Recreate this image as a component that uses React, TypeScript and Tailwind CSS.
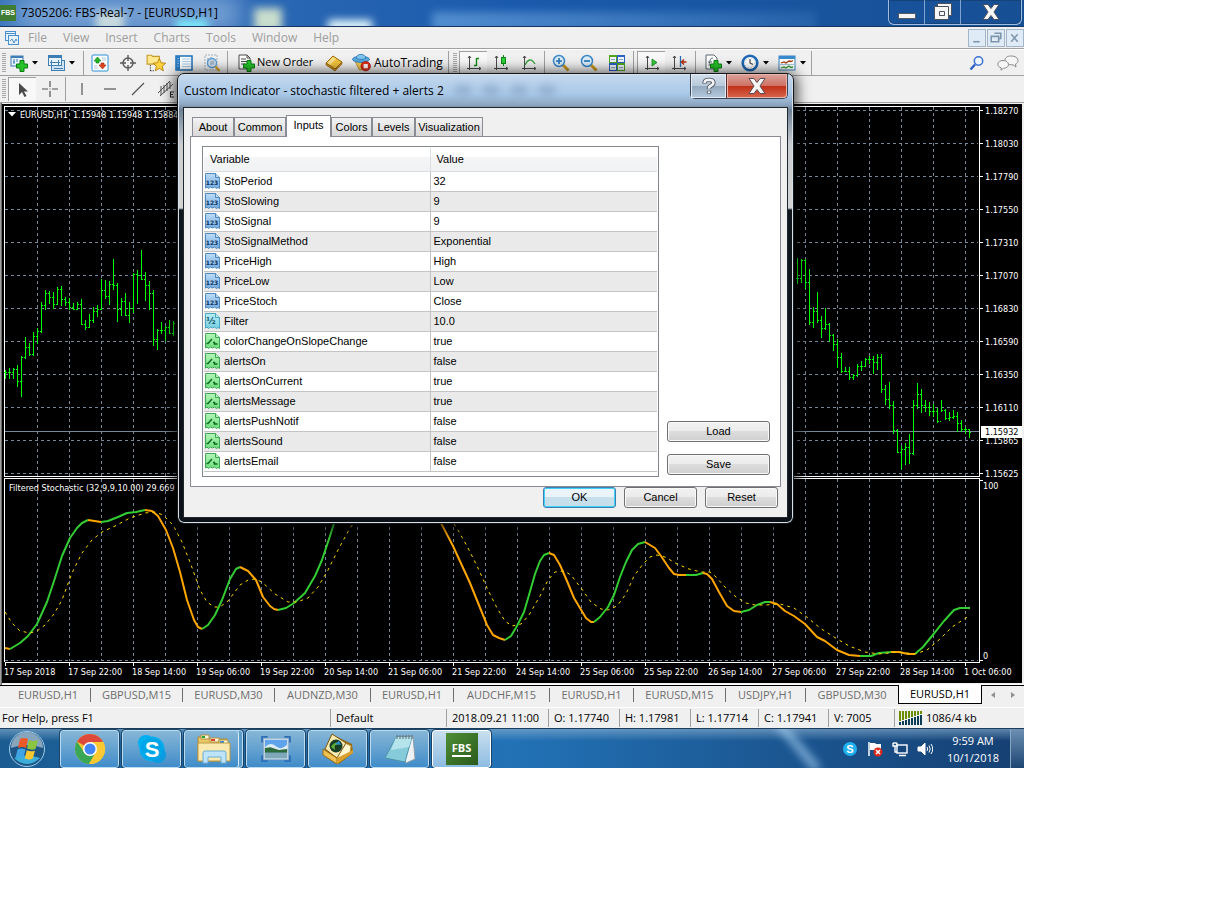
import React, { useState } from 'react';
import clsx from 'clsx';

type Bar = [number, number, number];
type Segment = { up: boolean; points: string };

// high, low, close of each bar, one bar every 4 units
const leftBars: Bar[] = [
  [370, 379, 372], [368, 379, 372], [368, 379, 369], [365, 387, 381], [356, 397, 357], [337, 359, 347],
  [343, 356, 354], [332, 356, 336], [328, 344, 331], [302, 333, 305], [290, 310, 293], [291, 304, 297],
  [292, 309, 304], [287, 305, 289], [286, 306, 299], [297, 306, 302], [298, 310, 307], [303, 310, 309],
  [302, 310, 304], [299, 325, 324], [320, 330, 327], [314, 328, 320], [307, 323, 311], [305, 317, 309],
  [279, 310, 290], [280, 299, 296], [281, 305, 284], [259, 290, 285], [283, 322, 309], [298, 316, 301],
  [293, 316, 315], [302, 323, 308], [273, 313, 274], [270, 304, 275], [250, 280, 279], [272, 301, 285],
  [281, 310, 293], [290, 346, 339], [329, 350, 330], [322, 334, 330], [326, 341, 327], [320, 334, 333],
  [321, 336, 323],
];

const rightBars: Bar[] = [
  [258, 284, 278], [259, 283, 260], [259, 289, 282], [269, 325, 322], [307, 328, 311], [292, 323, 320],
  [316, 338, 328], [308, 330, 324], [323, 342, 335], [334, 351, 344], [339, 368, 357], [353, 373, 371],
  [367, 372, 371], [367, 380, 377], [374, 380, 375], [364, 377, 366], [361, 371, 366], [358, 367, 359],
  [356, 364, 359], [356, 374, 362], [354, 370, 357], [354, 393, 389], [385, 405, 399], [382, 409, 405],
  [401, 434, 430], [429, 453, 452], [446, 469, 449], [443, 465, 447], [434, 464, 453], [400, 455, 405],
  [383, 409, 394], [389, 413, 405], [400, 412, 407], [402, 416, 411], [404, 417, 411], [408, 423, 421],
  [400, 412, 410], [409, 420, 418], [412, 421, 417], [410, 419, 416], [412, 432, 423], [420, 432, 429],
  [427, 434, 429], [429, 438, 432],
];

const stochastic: Segment[] = [
  { up: false, points: '5,648 10,649' },
  { up: true, points: '10,649 20,643 28,636 37,624 47,602 55,578 62,556 70,538 77,528 82,523 88,520' },
  { up: false, points: '88,520 101,522' },
  { up: true, points: '101,522 108,521 118,517 127,513 136,512 145,510' },
  { up: false, points: '145,510 152,511 158,516 166,530 173,548 180,572 187,600 194,620 198,627 202,629' },
  { up: true, points: '202,629 208,625 215,615 222,600 230,579 236,569 240,567' },
  { up: false, points: '240,567 248,571 256,580 263,597 270,606 274,609 278,610' },
  { up: true, points: '278,610 286,608 294,603 305,593 315,576 322,560 330,536 340,505' },
  { up: false, points: '432,500 441,523 453,546 470,583 487,625 493,635 499,638 505,640' },
  { up: true, points: '505,640 511,636 517,626 524,612 529,595 535,574 540,561 544,555 549,553' },
  { up: false, points: '549,553 554,555 560,565 567,581 574,598 580,608 586,618 591,622 594,622' },
  { up: true, points: '594,622 600,617 608,607 614,595 620,577 626,562 632,550 638,544 645,542' },
  { up: false, points: '645,542 650,545 655,548 661,556 669,568 674,574 679,575 686,575' },
  { up: true, points: '686,575 696,575 703,573' },
  { up: false, points: '703,573 707,574 712,579 719,592 727,606 734,611 741,612' },
  { up: true, points: '741,612 749,610 757,605 765,602 770,602' },
  { up: false, points: '770,602 777,604 785,611 794,616 805,624 817,637 825,641 837,650 849,655 860,656' },
  { up: true, points: '860,656 871,656 879,653 891,652' },
  { up: false, points: '891,652 899,652 908,654 915,654' },
  { up: true, points: '915,654 923,647 932,636 944,621 954,610 960,608 970,608' },
];

const signalLeft =
  '5,612 12,623 20,631 30,633 37,631 45,625 54,614 62,600 72,573 82,553 92,540 102,532 115,526 130,518 145,513 155,512 163,515 173,525 182,542 190,562 200,590 207,602 214,607 220,607 228,601 240,585 248,580 255,579 262,582 275,594 288,602 297,602 308,598 318,587 328,570 338,550 350,528 358,518';
const signalRight =
  '450,518 458,530 468,548 478,568 487,588 497,608 505,621 512,626 521,624 529,615 540,596 548,580 555,572 564,571 571,575 581,588 591,602 601,609 608,610 617,606 626,594 634,576 643,564 650,557 657,555 665,557 677,564 689,569 701,572 710,572 715,576 725,587 736,597 746,603 755,605 765,605 780,604 794,608 808,618 820,628 834,637 849,646 865,652 879,654 899,652 915,654 927,650 940,639 952,627 969,616';

const prices = ['1.18270', '1.18030', '1.17790', '1.17550', '1.17310', '1.17070', '1.16830', '1.16590', '1.16350', '1.16110', '1.15865', '1.15625'];

const dates = [
  '17 Sep 2018', '17 Sep 22:00', '18 Sep 14:00', '19 Sep 06:00', '19 Sep 22:00', '20 Sep 14:00', '21 Sep 06:00', '21 Sep 22:00',
  '24 Sep 14:00', '25 Sep 06:00', '25 Sep 22:00', '26 Sep 14:00', '27 Sep 06:00', '27 Sep 22:00', '28 Sep 14:00', '1 Oct 06:00',
];

const menuItems = ['File', 'View', 'Insert', 'Charts', 'Tools', 'Window', 'Help'];

const chartTabs = [
  { label: 'EURUSD,H1', width: 'w-[85px]' },
  { label: 'GBPUSD,M15', width: 'w-[92px]' },
  { label: 'EURUSD,M30', width: 'w-[92px]' },
  { label: 'AUDNZD,M30', width: 'w-[96px]' },
  { label: 'EURUSD,H1', width: 'w-[83px]' },
  { label: 'AUDCHF,M15', width: 'w-[96px]' },
  { label: 'EURUSD,H1', width: 'w-[84px]' },
  { label: 'EURUSD,M15', width: 'w-[92px]' },
  { label: 'USDJPY,H1', width: 'w-[80px]' },
  { label: 'GBPUSD,M30', width: 'w-[92px]' },
];

const statusCells = [
  { text: 'Default', width: 'w-[116px]' },
  { text: '2018.09.21 11:00', width: 'w-[102px]' },
  { text: 'O: 1.17740', width: 'w-[71px]' },
  { text: 'H: 1.17981', width: 'w-[71px]' },
  { text: 'L: 1.17714', width: 'w-[68px]' },
  { text: 'C: 1.17941', width: 'w-[70px]' },
  { text: 'V: 7005', width: 'w-[66px]' },
];

const dialogTabs = [
  { label: 'About', width: 'w-[42px]' },
  { label: 'Common', width: 'w-[52px]' },
  { label: 'Inputs', width: 'w-[45px]' },
  { label: 'Colors', width: 'w-[41px]' },
  { label: 'Levels', width: 'w-[43px]' },
  { label: 'Visualization', width: 'w-[68px]' },
];

type Kind = 'int' | 'double' | 'bool';

const inputs: { name: string; value: string; kind: Kind }[] = [
  { name: 'StoPeriod', value: '32', kind: 'int' },
  { name: 'StoSlowing', value: '9', kind: 'int' },
  { name: 'StoSignal', value: '9', kind: 'int' },
  { name: 'StoSignalMethod', value: 'Exponential', kind: 'int' },
  { name: 'PriceHigh', value: 'High', kind: 'int' },
  { name: 'PriceLow', value: 'Low', kind: 'int' },
  { name: 'PriceStoch', value: 'Close', kind: 'int' },
  { name: 'Filter', value: '10.0', kind: 'double' },
  { name: 'colorChangeOnSlopeChange', value: 'true', kind: 'bool' },
  { name: 'alertsOn', value: 'false', kind: 'bool' },
  { name: 'alertsOnCurrent', value: 'true', kind: 'bool' },
  { name: 'alertsMessage', value: 'true', kind: 'bool' },
  { name: 'alertsPushNotif', value: 'false', kind: 'bool' },
  { name: 'alertsSound', value: 'false', kind: 'bool' },
  { name: 'alertsEmail', value: 'false', kind: 'bool' },
];

const Svg: React.FC<{ size?: number; children: React.ReactNode }> = ({ size = 18, children }) => (
  <svg width={size} height={size} viewBox="0 0 18 18" fill="none" className="shrink-0">
    {children}
  </svg>
);

const Plus = () => <path d="M10 6.500h4v3.500h3.500v4H14v3.500h-4V14H6.500v-4H10z" fill="#27c32a" stroke="#0a7d12" />;

const NewChartIcon = () => (
  <Svg>
    <rect x="1" y="2" width="12" height="10" fill="#e8f3fc" stroke="#3f7db5" />
    <path d="M1 3h12" stroke="#3f7db5" strokeWidth="2" />
    <path d="M4 5v5M3 8h2M7 5v3" stroke="#3f7db5" />
    <Plus />
  </Svg>
);

const ProfilesIcon = () => (
  <Svg>
    <rect x="4.500" y="6.500" width="13" height="10" fill="#cfe3f5" stroke="#3f7db5" />
    <rect x="1.500" y="1.500" width="13" height="10" fill="#e8f3fc" stroke="#3f7db5" />
    <path d="M1 3h14" stroke="#3f7db5" strokeWidth="2" />
    <path d="M3 8.500h10M4.500 6v5M11.500 6v5" stroke="#3f7db5" />
    <path d="M7 14.500h9" stroke="#3f7db5" />
  </Svg>
);

const MarketWatchIcon = () => (
  <Svg>
    <rect x="1" y="1" width="16" height="16" rx="1" fill="#fdfeff" stroke="#2c8fd8" />
    <path d="M6.500 3L3 7h2v2h3V7h2z" fill="#22b322" stroke="#0d7d12" strokeWidth=".6" />
    <path d="M11.500 15L15 11h-2V9h-3v2H8z" fill="#e2421f" stroke="#96220b" strokeWidth=".6" />
    <path d="M11 4h4M11 6h4M3 12h3M3 14h4" stroke="#b6c7d6" />
  </Svg>
);

const CrosshairIcon = () => (
  <Svg>
    <circle cx="9" cy="9" r="5" stroke="#5b5b5b" strokeWidth="1.500" />
    <path d="M9 1v6M9 11v6M1 9h6M11 9h6" stroke="#5b5b5b" strokeWidth="1.400" />
  </Svg>
);

const NavigatorIcon = () => (
  <Svg size={20}>
    <path d="M1 2h4l1 1h6v7H1z" fill="#ffe98c" stroke="#c39a2a" />
    <path d="M4 11v6M4 16h4" stroke="#222" strokeDasharray="1 1" />
    <path d="M12 5l1.700 3.800 4 .4-3 2.700.9 4.100-3.600-2.100L8.400 16l.9-4.100-3-2.700 4-.4z" fill="#ffd23e" stroke="#b47b0b" strokeWidth=".8" />
  </Svg>
);

const TerminalIcon = () => (
  <Svg>
    <rect x="1" y="2" width="16" height="14" fill="#fff" stroke="#1d6fb8" strokeWidth="1.500" />
    <rect x="1" y="2" width="4" height="14" fill="#2c7cc2" />
    <path d="M7 5h9M7 7.500h9M7 10h9M7 12.500h9" stroke="#a9cdec" />
    <path d="M3 4v10" stroke="#bfe0fb" strokeDasharray="1 1.500" />
  </Svg>
);

const TesterIcon = () => (
  <Svg>
    <path d="M2 1h12v15H2z" fill="#eef2f5" stroke="#a5afb8" strokeDasharray="2 1" />
    <path d="M5 4v8M8 3v4M11 5v6" stroke="#7a8a99" />
    <circle cx="9" cy="9" r="4.500" fill="#cfe4f5" fillOpacity=".8" stroke="#5b9bd1" strokeWidth="1.300" />
    <path d="M8 7v4M10 6.500v4" stroke="#7a8a99" />
    <path d="M12.500 12.500l4 4.500" stroke="#d9a520" strokeWidth="2.400" />
  </Svg>
);

const OrderIcon = () => (
  <Svg>
    <path d="M2 1h8l3 3v11H2z" fill="#fff" stroke="#4c4c4c" />
    <path d="M10 1v3h3M4 5h5M4 7.500h6M4 10h4" stroke="#4c4c4c" />
    <Plus />
  </Svg>
);

const BookIcon = () => (
  <Svg>
    <path d="M1 9l7-7 9 6-7 7z" fill="#f2c23a" stroke="#9a6b0c" />
    <path d="M2 9l6-6 3 2-6 6z" fill="#fbe08a" />
    <path d="M1 9v2l9 6 7-7V8l-7 7z" fill="#c98f17" stroke="#8a5d09" strokeWidth=".6" />
  </Svg>
);

const AutoTradingIcon = () => (
  <Svg size={19}>
    <path d="M3 8h11l-3 8H7z" fill="#f2cb54" stroke="#a87a12" strokeWidth=".7" />
    <ellipse cx="8.500" cy="6" rx="8" ry="3" fill="#58a9df" stroke="#2871ad" strokeWidth=".7" />
    <path d="M4 5c0-5 9-5 9 0-2 1.500-7 1.500-9 0z" fill="#7fc4ee" stroke="#2871ad" strokeWidth=".7" />
    <circle cx="13" cy="12.500" r="4.500" fill="#de2c1b" stroke="#9a1409" strokeWidth=".6" />
    <rect x="11" y="10.500" width="4" height="4" fill="#fff" />
  </Svg>
);

const Axes = () => <path d="M4.500 2v14M2 14.500h14M3 4l1.500-2L6 4M14 13l2 1.500-2 1.500" stroke="#4a4a4a" />;

const BarChartIcon = () => (
  <Svg>
    <Axes />
    <path d="M11.500 4v8M9 11.500h2.500M11.500 4.500H14" stroke="#0e8a16" strokeWidth="1.400" />
  </Svg>
);

const CandleIcon = () => (
  <Svg>
    <Axes />
    <path d="M11.500 1v11" stroke="#0e8a16" />
    <rect x="9.500" y="3.500" width="4" height="6" fill="#2bd13a" stroke="#0e8a16" />
  </Svg>
);

const LineChartIcon = () => (
  <Svg>
    <Axes />
    <path d="M5 11c3-6 6-7 10-1" stroke="#2f9d35" strokeWidth="1.300" />
  </Svg>
);

const ZoomIcon: React.FC<{ plus?: boolean }> = ({ plus }) => (
  <Svg>
    <path d="M11 11l5.500 5.500" stroke="#c9991d" strokeWidth="3" />
    <circle cx="7" cy="7" r="5.500" fill="#d9edfb" stroke="#3c86c6" strokeWidth="1.500" />
    <path d={plus ? 'M4 7h6M7 4v6' : 'M4 7h6'} stroke="#2470b4" strokeWidth="1.600" />
  </Svg>
);

const TilesIcon = () => (
  <Svg>
    <rect x="1" y="1" width="8" height="8" fill="#55a51c" />
    <rect x="9" y="1" width="8" height="8" fill="#2d5fc4" />
    <rect x="1" y="9" width="8" height="8" fill="#2d5fc4" />
    <rect x="9" y="9" width="8" height="8" fill="#55a51c" />
    <path d="M2 3h6v5H2zM10 3h6v5h-6zM2 11h6v5H2zM10 11h6v5h-6z" fill="#eef5fb" />
    <path d="M3 5.500h4M11 5.500h4M3 13.500h4M11 13.500h4" stroke="#8fa6bb" />
  </Svg>
);

const AutoScrollIcon = () => (
  <Svg>
    <Axes />
    <path d="M9 5l5 3.500L9 12z" fill="#38c942" stroke="#0e8a16" strokeWidth=".8" />
  </Svg>
);

const ShiftIcon = () => (
  <Svg>
    <Axes />
    <path d="M10.500 2v11" stroke="#2470b4" strokeWidth="1.300" />
    <path d="M16.500 8h-5M14 5.500L11.500 8l2.500 2.500" stroke="#b5300f" strokeWidth="1.500" />
  </Svg>
);

const IndicatorsIcon = () => (
  <Svg>
    <path d="M2 1h8l3 3v11H2z" fill="#fff" stroke="#5d6a75" />
    <path d="M5 12c1-8 2-8 4-8M4 8h4" stroke="#5d6a75" />
    <Plus />
  </Svg>
);

const ClockIcon = () => (
  <Svg>
    <circle cx="9" cy="9" r="7.300" fill="#fff" stroke="#1f69b4" strokeWidth="2.600" />
    <path d="M9 5v4l3 1.500" stroke="#444" strokeWidth="1.200" />
    <circle cx="9" cy="9" r="5" stroke="#9fb6c9" strokeWidth=".8" strokeDasharray="1 2" />
  </Svg>
);

const TemplateIcon = () => (
  <Svg>
    <rect x="1" y="2" width="16" height="14" fill="#fff" stroke="#3b82bd" />
    <path d="M1 3.500h16" stroke="#3b8bd0" strokeWidth="3" />
    <path d="M3 9l3-1 2 1 3-2 2 .500 2-1" stroke="#a53b12" strokeWidth="1.300" />
    <path d="M3 14l3-1 2 1 3-2 2 1.500 2-.500" stroke="#2f9d35" strokeWidth="1.300" />
    <path d="M1 10.500h16" stroke="#a8c6dd" />
  </Svg>
);

const CursorIcon = () => (
  <Svg>
    <path d="M5 2v12l3-3 2.500 5 2-1L10 10.500h4z" fill="#4a4a4a" />
  </Svg>
);

const DrawIcon: React.FC<{ d: string }> = ({ d }) => (
  <Svg>
    <path d={d} stroke="#555" strokeWidth="1.200" />
  </Svg>
);

const ChannelIcon = () => (
  <Svg>
    <path d="M1 13L13 1M3 16L16 4M4 6v9M7 5v8M10 3v8M13 2v7" stroke="#4d4d4d" />
    <path d="M13 12h4M13 14.500h3M13 17h4M13.500 12v5" stroke="#222" />
  </Svg>
);

interface ToolButtonProps {
  label: string;
  pressed?: boolean;
  menu?: boolean;
  inset?: boolean;
  children: React.ReactNode;
}

const ToolButton: React.FC<ToolButtonProps> = ({ label, pressed, menu, inset, children }) => (
  <button
    aria-label={label}
    title={label}
    className={clsx(
      'flex h-6 shrink-0 items-center',
      menu ? 'w-[37px] gap-1' : 'w-7 justify-center',
      menu && (inset ? 'pl-[5px]' : 'pl-[2px]'),
      pressed && 'border-t border-l border-[#a0a0a0] bg-[#f8f8f8]'
    )}
  >
    {children}
    {menu && (
      <svg width="6" height="4" viewBox="0 0 6 4" className="shrink-0">
        <path d="M0 0h6L3 3.500z" fill="#000" />
      </svg>
    )}
  </button>
);

const Grip = () => <span className="mr-[2px] ml-[2px] h-5 w-1 shrink-0 bg-[repeating-linear-gradient(#a8a8a8_0_1px,#f0f0f0_1px_2px)]" />;
const Divider: React.FC<{ wide?: boolean }> = ({ wide }) => (
  <span className={clsx('h-6 w-[2px] shrink-0 border-l border-[#a0a0a0]', wide ? 'mx-[2px]' : 'mx-px')} />
);

const TitleBar = () => (
  <header className="relative flex h-[27px] items-center overflow-hidden border-b border-[#16365f] bg-gradient-to-r from-[#3a75bb] via-[#1a5aac] to-[#174f94]">
    <div className="absolute -top-1 left-4 h-9 w-56 bg-[#a9c8ea] opacity-60 blur-md" />
    <div className="absolute top-3 left-24 h-5 w-7 bg-[#eef6e4] opacity-70 blur-xs" />
    <div className="absolute top-5 left-44 h-3 w-8 bg-[#7ef0ff] blur-xs" />
    <div className="absolute top-2 left-[254px] h-6 w-7 bg-[#dcebd0] opacity-90 blur-xs" />
    <div className="absolute top-5 left-[328px] h-3 w-11 bg-[#eafcff] blur-xs" />
    <div className="absolute top-3 left-[432px] h-5 w-96 bg-gradient-to-r from-[#5f9ad8] to-[#2a66ad] opacity-80 blur-xs" />
    <div className="relative flex h-4 w-4 items-center justify-center bg-[#3f7d35] font-['Liberation_Sans'] text-[7px] font-bold text-white">FBS</div>
    <h1 className="relative ml-[5px] flex-1 text-[12px] text-black">7305206: FBS-Real-7 - [EURUSD,H1]</h1>
    <div className="relative mr-[2px] flex h-[25px] self-start rounded-b-md border border-t-0 border-[#9fbde0] shadow-[inset_0_0_0_1px_#16427a]">
      <button aria-label="Minimize" className="flex w-9 items-center justify-center border-r border-[#7ea3d0]">
        <svg width="20" height="20" viewBox="0 0 20 20"><rect x="1.500" y="11.500" width="17" height="5" fill="#f5f5f5" stroke="#555a66" /></svg>
      </button>
      <button aria-label="Restore" className="flex w-9 items-center justify-center border-r border-[#7ea3d0]">
        <svg width="20" height="20" viewBox="0 0 20 20" fill="#f5f5f5" stroke="#4a505e">
          <path d="M4.500 1.500h14v12h-14z" />
          <path fillRule="evenodd" d="M1.500 4.500h14v13h-14zM6.500 9.500v4h5v-4z" />
        </svg>
      </button>
      <button aria-label="Close" className="flex w-[60px] items-center justify-center">
        <svg width="20" height="18" viewBox="0 0 20 18">
          <path d="M2 1.500h5l3 4 3-4h5L13 9l5 7.500h-5l-3-4-3 4H2L7 9z" fill="#f5f5f5" stroke="#4a505e" />
        </svg>
      </button>
    </div>
  </header>
);

const MenuBar = () => (
  <nav className="flex h-[22px] items-center border-b border-[#a0a0a0] bg-[#f0f0f0] text-[12px] text-[#9d9d9d]">
    <svg width="16" height="16" viewBox="0 0 16 16" fill="#e7f2fc" stroke="#4a8fd0" className="mr-2 ml-1 shrink-0">
      <rect x="1.500" y="1.500" width="10" height="9" />
      <path d="M1 3.500h10" />
      <rect x="4.500" y="5.500" width="10" height="9" />
      <path d="M6 11l2-2 2 4 2-4 1 2" fill="none" />
    </svg>
    <div className="flex flex-1 gap-4">
      {menuItems.map((item) => (
        <button key={item}>{item}</button>
      ))}
    </div>
    <div className="flex gap-px">
      {['M4 11h6', 'M6 3h6v5h-2M3 6h7v5H3z', 'M4 4l6 7M10 4l-6 7'].map((d, i) => (
        <button key={d} aria-label={['Minimize chart', 'Restore chart', 'Close chart'][i]} className="h-[18px] w-[18px] border border-[#a3b6c9] bg-[#dfebf7]">
          <svg width="16" height="16" viewBox="0 0 15 15" fill="none" stroke="#7f97ad" strokeWidth="1.500">
            <path d={d} />
          </svg>
        </button>
      ))}
    </div>
  </nav>
);

const Toolbars = () => (
  <div className="bg-[#f0f0f0]">
    <div className="flex h-[26px] items-center overflow-hidden border-t border-white text-[12px] text-black">
      <Grip />
      <ToolButton label="New chart" menu><NewChartIcon /></ToolButton>
      <ToolButton label="Profiles" menu><ProfilesIcon /></ToolButton>
      <Divider />
      <ToolButton label="Market watch"><MarketWatchIcon /></ToolButton>
      <ToolButton label="Data window"><CrosshairIcon /></ToolButton>
      <ToolButton label="Navigator"><NavigatorIcon /></ToolButton>
      <ToolButton label="Terminal"><TerminalIcon /></ToolButton>
      <ToolButton label="Strategy tester"><TesterIcon /></ToolButton>
      <Divider />
      <button className="flex w-[90px] shrink-0 items-center gap-[2px] pl-[7px] text-[11px] whitespace-nowrap"><OrderIcon />New Order</button>
      <ToolButton label="MetaEditor"><BookIcon /></ToolButton>
      <button className="flex w-[99px] shrink-0 items-center gap-[3px] pl-1 text-[12px] whitespace-nowrap"><AutoTradingIcon />AutoTrading</button>
      <Divider />
      <Grip />
      <ToolButton label="Bar chart" pressed><BarChartIcon /></ToolButton>
      <ToolButton label="Candlesticks"><CandleIcon /></ToolButton>
      <ToolButton label="Line chart"><LineChartIcon /></ToolButton>
      <Divider />
      <ToolButton label="Zoom in"><ZoomIcon plus /></ToolButton>
      <ToolButton label="Zoom out"><ZoomIcon /></ToolButton>
      <ToolButton label="Tile windows"><TilesIcon /></ToolButton>
      <Divider wide />
      <ToolButton label="Auto scroll" pressed><AutoScrollIcon /></ToolButton>
      <ToolButton label="Chart shift"><ShiftIcon /></ToolButton>
      <Divider wide />
      <ToolButton label="Indicators" menu inset><IndicatorsIcon /></ToolButton>
      <ToolButton label="Periods" menu inset><ClockIcon /></ToolButton>
      <ToolButton label="Templates" menu inset><TemplateIcon /></ToolButton>
      <Divider />
      <span className="flex-1" />
      <button aria-label="Search" className="mr-3 shrink-0">
        <svg width="16" height="16" viewBox="0 0 16 16" fill="none">
          <path d="M6 9.500L1.500 14.500" stroke="#2f62c4" strokeWidth="2.500" />
          <circle cx="9.500" cy="6" r="4.200" fill="#eef5ff" stroke="#3a72d8" strokeWidth="1.500" />
        </svg>
      </button>
      <button aria-label="Chat" className="mr-[5px] shrink-0">
        <svg width="22" height="16" viewBox="0 0 22 16" fill="#f6f6f6" stroke="#8a8a8a">
          <path d="M14 1c4 0 7 1.800 7 4.500 0 1.700-1 2.800-2.500 3.500l.5 3-3-2.200C11 10 8 8.500 8 5.500 8 2.800 10 1 14 1z" />
          <path d="M6 5.500c3 0 5.500 1.500 5.500 4S9 13.300 6.500 13.300L4 15.200l.2-2.400C2 12.200.8 11 .8 9.300c0-2.300 2.200-3.800 5.200-3.800z" />
        </svg>
      </button>
    </div>
    <div className="flex h-[27px] items-center border-t border-[#a0a0a0]">
      <Grip />
      <ToolButton label="Cursor" pressed><CursorIcon /></ToolButton>
      <ToolButton label="Crosshair"><DrawIcon d="M9 1v6M9 11v6M1 9h6M11 9h6M8.500 9h1" /></ToolButton>
      <Divider />
      <ToolButton label="Vertical line"><DrawIcon d="M9 3v12" /></ToolButton>
      <ToolButton label="Horizontal line"><DrawIcon d="M3 9h12" /></ToolButton>
      <ToolButton label="Trendline"><DrawIcon d="M3 15L15 3" /></ToolButton>
      <ToolButton label="Equidistant channel"><ChannelIcon /></ToolButton>
    </div>
  </div>
);

const Bars: React.FC<{ bars: Bar[]; start: number }> = ({ bars, start }) => (
  <g fill="#00ff00" stroke="none">
    {bars.map(([high, low, close], i) => {
      const x = start + i * 4;
      const open = i ? bars[i - 1][2] : close;
      return (
        <g key={x}>
          <rect x={x} y={high} width="1" height={low - high} />
          <rect x={x - 1} y={open} width="1" height="1" />
          <rect x={x + 1} y={close} width="1" height="1" />
        </g>
      );
    })}
  </g>
);

const Chart = () => (
  <svg viewBox="0 102 1024 583" className="block h-auto w-full bg-[#f0f0f0] font-['DejaVu_Sans_Condensed','DejaVu_Sans',sans-serif] text-[9px]">
    <g shapeRendering="crispEdges" fill="none">
      <path d="M0 102.500H1024M.5 102V685" stroke="#a0a0a0" />
      <path d="M1.500 103V685" stroke="#696969" />
      <rect x="2" y="104" width="1020" height="579" fill="#000" />
      <path d="M2 684.500H1024" stroke="#fff" />
      <g stroke="#778899" strokeDasharray="3 3">
        {prices.map((p, i) => (
          <path key={p} d={`M5 ${110.5 + i * 33}H978`} />
        ))}
        {Array.from({ length: 30 }, (_, i) => (
          <path key={i} d={`M${37.5 + i * 32} 107V661`} />
        ))}
        <path d="M5 660.500H978" />
      </g>
      <path d="M5 431.500H979" stroke="#778899" />
      <path d="M4 477.500H984" stroke="#000" strokeWidth="2" />
      <path d="M4.500 106V476.500H979.500V106.500H4.500M4.500 662V478.500H979.500V662.500H4.500" stroke="#fff" />
      <path d={prices.map((_, i) => `M980 ${110.5 + i * 33}h3`).join('') + 'M980 480.500h3M980 660.500h3'} stroke="#fff" />
      <path d={dates.map((_, i) => `M${5.5 + i * 64} 663v3`).join('')} stroke="#fff" />
      <Bars bars={leftBars} start={5} />
      <Bars bars={rightBars} start={797} />
      {stochastic.map((s) => (
        <polyline key={s.points} points={s.points} stroke={s.up ? '#32cd32' : '#ffa500'} strokeWidth="2" strokeLinejoin="round" shapeRendering="auto" />
      ))}
      <polyline points={signalLeft} stroke="#ffd700" strokeDasharray="3 4" shapeRendering="auto" />
      <polyline points={signalRight} stroke="#ffd700" strokeDasharray="3 4" shapeRendering="auto" />
      <rect x="981" y="426" width="41" height="12" fill="#fff" />
    </g>
    <g fill="#fff">
      <path d="M8 112h8l-4 4.500z" />
      <text x="20" y="118">EURUSD,H1&nbsp; 1.15948 1.15948 1.15884</text>
      <text x="9" y="491">Filtered Stochastic (32,9,9,10.00) 29.669</text>
      {prices.map((p, i) => (
        <text key={p} x="985" y={114 + i * 33}>{p}</text>
      ))}
      <text x="983" y="489">100</text>
      <text x="983" y="659">0</text>
      {dates.map((d, i) => (
        <text key={d} x={4 + i * 64} y="675">{d}</text>
      ))}
      <rect x="981" y="426" width="41" height="12" />
    </g>
    <text x="985" y="435" fill="#000">1.15932</text>
  </svg>
);

const ChartTabs = () => (
  <div className="flex h-[22px] items-start border-t border-black bg-[#f0f0f0] text-[11px] text-[#6d6d6d]">
    <div className="ml-[6px] flex h-[18px] items-center">
      {chartTabs.map((tab, i) => (
        <button key={i} className={clsx('h-[14px] shrink-0 text-center leading-[14px]', tab.width, i < chartTabs.length - 1 && 'border-r border-[#6d6d6d]')}>
          {tab.label}
        </button>
      ))}
    </div>
    <button className="-mt-px h-[19px] w-[84px] border border-t-0 border-black bg-white text-black">EURUSD,H1</button>
    <div className="flex h-[18px] flex-1 items-center justify-center gap-3">
      <button aria-label="Scroll left"><svg width="8" height="8" viewBox="0 0 8 8"><path d="M6 1v6L2 4z" fill="#909090" /></svg></button>
      <button aria-label="Scroll right"><svg width="8" height="8" viewBox="0 0 8 8"><path d="M2 1v6l4-3z" fill="#909090" /></svg></button>
    </div>
  </div>
);

const StatusBar = () => (
  <footer className="flex h-[21px] items-center border-t border-white bg-[#f0f0f0] text-[11px] whitespace-nowrap text-black">
    <span className="flex-1 pl-[2px]">For Help, press F1</span>
    {statusCells.map((cell) => (
      <span key={cell.text} className={clsx('h-[18px] shrink-0 border-l border-[#a0a0a0] pl-[5px] leading-[18px]', cell.width)}>
        {cell.text}
      </span>
    ))}
    <span className="flex h-[18px] w-[130px] shrink-0 items-center gap-1 border-l border-[#a0a0a0] pl-1">
      <svg width="23" height="14" viewBox="0 0 23 14" shapeRendering="crispEdges">
        {Array.from({ length: 8 }, (_, i) => (
          <g key={i}>
            <rect x={i * 3} y="0" width="2" height={10 - i} fill="#6b8e00" />
            <rect x={i * 3} y={11 - i} width="2" height={3 + i} fill="#0b3c56" />
          </g>
        ))}
      </svg>
      1086/4 kb
    </span>
  </footer>
);

const ChromeLogo = () => (
  <svg width="32" height="32" viewBox="0 0 32 32">
    <circle cx="16" cy="16" r="15" fill="#fbc934" />
    <path d="M16 16L3 8.500A15 15 0 0 1 29 8.500z" fill="#dd4a3c" />
    <path d="M3 8.500A15 15 0 0 0 15 31l7-12-6-3-6 3z" fill="#3aa757" />
    <path d="M16 9h13.300A15 15 0 0 1 15 31l7-12z" fill="#fbc934" />
    <circle cx="16" cy="16" r="7" fill="#fff" />
    <circle cx="16" cy="16" r="5.500" fill="#4285f4" />
  </svg>
);

const SkypeLogo = () => (
  <svg width="32" height="32" viewBox="0 0 32 32">
    <circle cx="16" cy="16" r="12.500" fill="#00aff0" />
    <circle cx="10" cy="10" r="8" fill="#00aff0" />
    <circle cx="22" cy="22" r="8" fill="#0a9be0" />
    <circle cx="16" cy="16" r="11" fill="#00a5e8" />
    <text x="16" y="24" textAnchor="middle" fill="#fff" className="font-['Liberation_Sans'] text-[22px] font-bold">S</text>
  </svg>
);

const FolderLogo = () => (
  <svg width="36" height="32" viewBox="0 0 36 32">
    <path d="M2 4h9l2 2h18v22H2z" fill="#e9c765" stroke="#a88532" />
    <path d="M5 2h8v4H5z" fill="#fff6d8" stroke="#b6923c" />
    <path d="M6 3h3v2H6z" fill="#22a33a" />
    <path d="M14 5h9v4h-9z" fill="#fff6d8" stroke="#b6923c" />
    <path d="M15 6h4v2h-4z" fill="#d8402a" />
    <path d="M23 7h9v4h-9z" fill="#fff6d8" stroke="#b6923c" />
    <path d="M24 8h4v2h-4z" fill="#2b8fd8" />
    <path d="M2 10h32v18H2z" fill="#faeab0" stroke="#bb9945" />
    <path d="M7 30V20q0-2 2-2h19q2 0 2 2v10h-5v-6H12v6z" fill="#bfe3f7" stroke="#6aaed6" />
  </svg>
);

const PictureLogo = () => (
  <svg width="30" height="26" viewBox="0 0 32 28">
    <rect x="3" y="3" width="26" height="22" fill="#fff" stroke="#a8b8c6" />
    <rect x="4" y="4" width="24" height="20" fill="#5fa3ea" />
    <path d="M4 12q6-6 12-1t12-2v7H4z" fill="#dcecf6" />
    <path d="M4 13l6-1 9 3 9-1v4H4z" fill="#2f6a3d" />
    <path d="M4 18h24v6H4z" fill="#7fa9b8" />
    <path d="M1 7V1h6M25 1h6v6M31 21v6h-6M7 27H1v-6" fill="none" stroke="#2f6fb5" strokeWidth="2" />
  </svg>
);

const BookLogo = () => (
  <svg width="34" height="34" viewBox="0 0 34 34">
    <path d="M12 3l19 9 1 9-14 11L2 22z" fill="#9a6a12" />
    <path d="M12 5l18 9-1 7-13 7z" fill="#fff6d2" stroke="#c39a3a" />
    <path d="M11 2l14 9-9 15L4 17z" fill="#f7eab0" stroke="#7c5510" />
    <path d="M2 17l14 9v6L2 23z" fill="#f0c152" stroke="#9a6a12" />
    <path d="M16 26l16-8v3L16 32z" fill="#d9a02f" />
    <circle cx="15" cy="14" r="6.500" fill="#173f24" />
    <path d="M10 15q3-6 9-4-2 2-4 2t-1 5" fill="#5fae3a" />
    <path d="M14 12l4-3 2 4z" fill="#2a8fd0" />
  </svg>
);

const NotepadLogo = () => (
  <svg width="32" height="30" viewBox="0 0 32 30">
    <path d="M12 3l17-1 2 23-9 4z" fill="#eef2f4" stroke="#8fa0aa" />
    <path d="M12 3h16l-7 25L1 24z" fill="#86cbd9" stroke="#4b93a8" />
    <path d="M12 3h16l-3 10-18 3z" fill="#b6e4ec" />
    <path d="M13 1v4M16 1v4M19 1v4M22 1v4M25 1v4M28 1v4" stroke="#5a6870" />
  </svg>
);

const taskButtons = [
  { label: 'Chrome', icon: <ChromeLogo /> },
  { label: 'Skype', icon: <SkypeLogo /> },
  { label: 'Explorer', icon: <FolderLogo />, stacked: true },
  { label: 'Pictures', icon: <PictureLogo /> },
  { label: 'Library', icon: <BookLogo /> },
  { label: 'Notepad', icon: <NotepadLogo /> },
];

const Taskbar = () => (
  <div className="relative flex h-10 items-center overflow-hidden border-t border-[#1c3d5c] bg-gradient-to-r from-[#1b5c91] via-[#2272b6] to-[#153f72]">
    <div className="absolute inset-x-0 top-0 h-3 bg-gradient-to-b from-[#8fb4d2] to-transparent opacity-60" />
    <div className="absolute -top-4 left-[793px] h-16 w-2 -rotate-40 bg-[#a9d4f5] opacity-70 blur-xs" />
    <button aria-label="Start" className="relative flex w-[60px] shrink-0 justify-center pr-[6px]">
      <svg width="38" height="38" viewBox="0 0 38 38">
        <circle cx="19" cy="19" r="17.500" fill="#1d5585" stroke="#9fd0ee" />
        <path d="M3 18a16 16 0 0 1 32 0q-16-6-32 0z" fill="#a3b9cb" opacity=".8" />
        <path d="M6 28q13 12 26 0-13-5-26 0z" fill="#43c5ee" opacity=".8" />
        <path d="M12 9q4-2 8 0l-2 9q-4-2-8 0z" fill="#ee5a27" />
        <path d="M21 10q4 2 9 0l-2.500 9q-4 1.500-8.500-.500z" fill="#8bc43f" />
        <path d="M9.500 19.500q4-2 8 0l-2 8.500q-4-2-8 0z" fill="#3fa4e6" />
        <path d="M18.800 20.300q4 2 8.200.2l-2.200 8q-4 2-8-.2z" fill="#fdc72f" />
      </svg>
    </button>
    <div className="relative flex gap-[3px]">
      {taskButtons.map((b) => (
        <button
          key={b.label}
          aria-label={b.label}
          className={clsx(
            'flex h-[38px] w-[59px] items-center justify-center rounded-[3px] border border-[#b9dcf2] bg-gradient-to-b from-[#86b6d6] to-[#3f8cc9] outline outline-[#1a4468]',
            b.stacked && 'shadow-[inset_-3px_0_0_#5b9bca,inset_-4px_0_0_#d7ecfb]'
          )}
        >
          {b.icon}
        </button>
      ))}
      <button className="flex h-[38px] w-[59px] items-center justify-center rounded-[3px] border border-white bg-gradient-to-b from-[#c9dfee] to-[#8dbce2] outline outline-[#1a4468]">
        <span className="flex h-8 w-8 items-center justify-center bg-gradient-to-br from-[#4f8f35] to-[#2b5a1c] font-['Open_Sans'] text-[11px] leading-[14px] font-bold text-white">
          <span className="border-b-2 border-white">FBS</span>
        </span>
      </button>
    </div>
    <span className="flex-1" />
    <div className="relative flex shrink-0 items-center gap-[9px]">
      <svg width="16" height="16" viewBox="0 0 16 16">
        <circle cx="8" cy="8" r="7" fill="#1fb0ee" />
        <text x="8" y="12" textAnchor="middle" fill="#fff" className="font-['Liberation_Sans'] text-[11px] font-bold">S</text>
      </svg>
      <svg width="16" height="16" viewBox="0 0 16 16">
        <path d="M2 1v14" stroke="#fff" strokeWidth="1.500" />
        <path d="M3 2h5l1 1h5v7H8L7 9H3z" fill="#fff" />
        <circle cx="11" cy="11" r="4.500" fill="#d9291b" />
        <path d="M9 9l4 4M13 9l-4 4" stroke="#fff" strokeWidth="1.500" />
      </svg>
      <svg width="16" height="16" viewBox="0 0 16 16" fill="none" stroke="#fff" strokeWidth="1.400">
        <rect x="5" y="4" width="10" height="8" fill="#17467c" />
        <path d="M7 14.500h7M1 2v3h4V2M2 1v2M4 1v2M3 5v6h2" />
      </svg>
      <svg width="16" height="16" viewBox="0 0 16 16" fill="none" stroke="#fff">
        <path d="M1 6h3l4-4v12l-4-4H1z" fill="#fff" />
        <path d="M10 6q1.500 2 0 4M12 4.500q2.500 3.500 0 7M14 3q3.500 5 0 10" />
      </svg>
    </div>
    <div className="relative mr-[7px] ml-[10px] w-[60px] shrink-0 text-center text-[11px] leading-[17px] text-white">
      <p>9:59 AM</p>
      <p>10/1/2018</p>
    </div>
    <button aria-label="Show desktop" className="relative h-10 w-[14px] shrink-0 border-l border-[#86a6c4] bg-gradient-to-b from-[#6d90b3] to-[#1b4472]" />
  </div>
);

const kindStyle: Record<Kind, { from: string; to: string; edge: string }> = {
  int: { from: '#bfdcf8', to: '#74acdf', edge: '#3f7db5' },
  double: { from: '#b9ecf6', to: '#74cfe2', edge: '#3aa0b6' },
  bool: { from: '#b4f5ba', to: '#6fdf7c', edge: '#2f9d4a' },
};

const KindIcon: React.FC<{ kind: Kind }> = ({ kind }) => {
  const { from, to, edge } = kindStyle[kind];
  return (
    <svg width="16" height="16" viewBox="0 0 16 16" className="shrink-0">
      <defs>
        <linearGradient id={`kind-${kind}`} x2="0" y2="1">
          <stop stopColor={from} />
          <stop offset="1" stopColor={to} />
        </linearGradient>
      </defs>
      <path d="M1.500.5h10l4 4v11l-1.500-1-1.500 1-2-1.500-2 1-2-1-2 1.500-1.500-1.500-1.500 1V1.500z" fill={`url(#kind-${kind})`} stroke={edge} strokeWidth=".9" />
      <path d="M11.500.5v4h4" fill={from} stroke={edge} strokeWidth=".9" />
      {kind === 'int' && <text x="8" y="11.500" textAnchor="middle" fill="#0c2f5c" className="font-['DejaVu_Sans'] text-[6px] font-bold">123</text>}
      {kind === 'double' && <text x="7" y="11" textAnchor="middle" fill="#0e5263" className="font-['DejaVu_Sans'] text-[9px] font-bold">½</text>}
      {kind === 'bool' && <path d="M2.500 10.500H4l4-4.500M9 9.500h1.500V11h3" fill="none" stroke="#0c6b22" strokeWidth="1.400" />}
    </svg>
  );
};

const DialogButton: React.FC<{ children: React.ReactNode; wide?: boolean; primary?: boolean }> = ({ children, wide, primary }) => (
  <button
    className={clsx(
      'h-[21px] rounded-[3px] border text-[11px] text-black',
      wide ? 'w-[103px]' : 'w-[73px]',
      primary
        ? 'border-[#3c7fb1] bg-[linear-gradient(#eaf4fa_50%,#c7dfeb_50%)] shadow-[inset_0_0_0_1px_#40d0f8]'
        : 'border-[#707070] bg-[linear-gradient(#f2f2f2,#ebebeb_50%,#dddddd_50%,#cfcfcf)] shadow-[inset_0_0_0_1px_#fafafa]'
    )}
  >
    {children}
  </button>
);

const IndicatorDialog = () => {
  const [activeTab, setActiveTab] = useState('Inputs');

  return (
    <section
      role="dialog"
      aria-labelledby="dialog-title"
      className="absolute top-[73px] left-[177px] flex w-[617px] flex-col rounded-[7px] border border-[#14181d] bg-[linear-gradient(#c5d9ee_0,#a9c8e8_20px,#8fa9c4_30px,#6e8196_36px,#c9ccd0_70px,#d4d4d4_134px,#10161d_136px,#0c1117)] pr-[5px] pb-[5px] pl-[5px] font-['Liberation_Sans',Arial,sans-serif] text-[11px] text-black shadow-[inset_0_0_0_1px_#d5dfe8,0_2px_14px_3px_rgba(0,0,0,0.7)]"
    >
      <div className="flex h-[33px] items-start overflow-hidden">
        <h2 id="dialog-title" className="flex-1 pt-[9px] pl-px font-['Open_Sans',sans-serif] text-[12px] leading-4">
          Custom Indicator - stochastic filtered + alerts 2
        </h2>
        <div className="mt-3 mr-[135px] flex gap-3">
          {[0, 1, 2, 3].map((i) => (
            <span key={i} className="h-2 w-4 bg-[#58779a] opacity-40 blur-xs" />
          ))}
        </div>
        <div className="flex h-[25px] rounded-b-[5px] border border-t-0 border-[#3b4756]">
          <button aria-label="Help" className="flex w-9 items-center justify-center border-r border-[#5a2a28] bg-[linear-gradient(#d3dfeb,#b8c9da_50%,#93a8be_50%,#b6cade)] shadow-[inset_0_0_0_1px_#e4edf6]">
            <svg width="14" height="18" viewBox="0 0 16 20" fill="none">
              <path d="M3 7V6q0-3 5-3t5 3q0 2.500-2.500 3.500T8 13.500M8 15.500v3" stroke="#48505c" strokeWidth="5" />
              <path d="M3 6.500V6q0-3 5-3t5 3q0 2.500-2.500 3.500T8 13M8 16v2" stroke="#f2f2f2" strokeWidth="3" />
            </svg>
          </button>
          <button aria-label="Close dialog" className="flex w-[60px] items-center justify-center rounded-br-[4px] bg-[linear-gradient(#dba39b,#cf6f62_50%,#bf3017_50%,#d8664d)] shadow-[inset_0_0_0_1px_#eab5ab]">
            <svg width="20" height="18" viewBox="0 0 20 18">
              <path d="M2 1.500h5l3 4 3-4h5L13 9l5 7.500h-5l-3-4-3 4H2L7 9z" fill="#f5f5f5" stroke="#5b4a50" />
            </svg>
          </button>
        </div>
      </div>

      <div className="flex flex-col border border-[#20262d] bg-[#f0f0f0] px-[6px] pt-[7px] pb-[9px]">
        <div role="tablist" className="flex items-end pl-[2px]">
          {dialogTabs.map((tab) => {
            const active = tab.label === activeTab;
            return (
              <button
                key={tab.label}
                role="tab"
                aria-selected={active}
                onClick={() => setActiveTab(tab.label)}
                className={clsx(
                  'shrink-0 border border-b-0 border-[#898c95] text-center',
                  tab.width,
                  active ? 'relative z-10 -mb-px h-[22px] bg-white pb-[2px]' : 'h-[19px] bg-gradient-to-b from-[#f3f3f3] to-[#d8d8d8]'
                )}
              >
                {tab.label}
              </button>
            );
          })}
        </div>
        <div className="flex gap-[8px] border border-[#898c95] bg-white py-[9px] pr-[10px] pl-[11px]">
          <div className="flex-1 border border-[#828790] px-px pt-px pb-1">
            <table className="w-full table-fixed border-collapse text-left">
              <thead>
                <tr className="h-[23px] bg-[linear-gradient(#ffffff_40%,#f4f5f7_40%,#f1f2f4)]">
                  <th className="w-[226px] border-r border-b border-[#dcdde0] pl-[6px] font-normal">Variable</th>
                  <th className="border-b border-[#dcdde0] pl-[6px] font-normal">Value</th>
                </tr>
              </thead>
              <tbody>
                {inputs.map((row) => (
                  <tr key={row.name} className="h-5 border-b border-[#c4c4c4] even:bg-[#eaeaea]">
                    <td className="border-r border-[#c4c4c4] p-0">
                      <div className="flex h-[19px] items-center gap-1">
                        <KindIcon kind={row.kind} />
                        {row.name}
                      </div>
                    </td>
                    <td className="p-0 pl-[3px]">{row.value}</td>
                  </tr>
                ))}
              </tbody>
            </table>
          </div>
          <div className="flex flex-col justify-end gap-3 pb-[2px]">
            <DialogButton wide>Load</DialogButton>
            <DialogButton wide>Save</DialogButton>
          </div>
        </div>
        <div className="flex justify-end gap-2 pr-[3px]">
          <DialogButton primary>OK</DialogButton>
          <DialogButton>Cancel</DialogButton>
          <DialogButton>Reset</DialogButton>
        </div>
      </div>
    </section>
  );
};

const App: React.FC = () => (
  <main className="relative w-full max-w-[1024px] font-['Open_Sans',sans-serif]">
    <TitleBar />
    <MenuBar />
    <Toolbars />
    <Chart />
    <ChartTabs />
    <StatusBar />
    <Taskbar />
    <IndicatorDialog />
  </main>
);

export default App;
